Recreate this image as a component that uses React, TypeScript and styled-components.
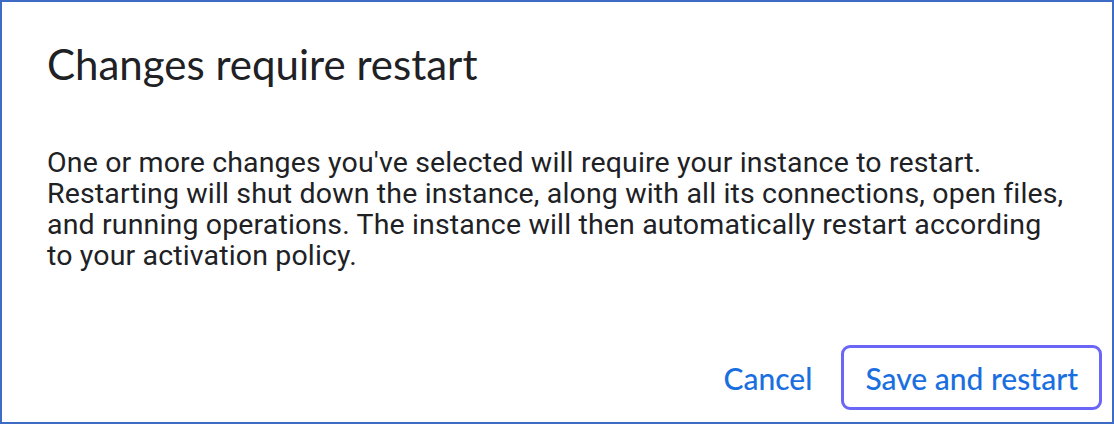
import React from 'react'
import styled, { createGlobalStyle } from 'styled-components'

const GlobalStyle = createGlobalStyle`
  html, body {
    margin: 0;
    padding: 0;
    background: #ffffff;
  }
  * {
    box-sizing: border-box;
  }
`

const Dialog = styled.div`
  display: flex;
  flex-direction: column;
  width: 1114px;
  height: 424px;
  border: 2px solid #3d6bc6;
  padding: 38px 45px 0;
  background: #ffffff;
`

const Title = styled.h1`
  margin: 0;
  font-family: Lato, 'Open Sans', sans-serif;
  font-weight: 400;
  font-size: 42px;
  line-height: 49px;
  color: #202124;
`

const Body = styled.p`
  margin: 58px 0 0;
  font-family: Roboto, 'Liberation Sans', sans-serif;
  font-size: 28.5px;
  line-height: 31px;
  letter-spacing: 0.15px;
  white-space: nowrap;
  color: #202124;
`

const Actions = styled.div`
  display: flex;
  justify-content: flex-end;
  align-items: center;
  gap: 16px;
  margin-top: auto;
  margin-right: -35px;
  margin-bottom: 12px;
`

const Button = styled.button<{ $focused?: boolean }>`
  font-family: Lato, 'Open Sans', sans-serif;
  font-weight: 500;
  font-size: 30px;
  color: #1a6fe0;
  background: transparent;
  border: 3px solid ${({ $focused }) => ($focused ? '#6b66f8' : 'transparent')};
  border-radius: 9px;
  height: 65px;
  padding: 0 ${({ $focused }) => ($focused ? '21px' : '10px')};
  cursor: pointer;
`

const App = () => (
  <>
    <GlobalStyle />
    <Dialog>
      <Title>Changes require restart</Title>
      <Body>
        One or more changes you've selected will require your instance to restart.
        <br />
        Restarting will shut down the instance, along with all its connections, open files,
        <br />
        and running operations. The instance will then automatically restart according
        <br />
        to your activation policy.
      </Body>
      <Actions>
        <Button>Cancel</Button>
        <Button $focused>Save and restart</Button>
      </Actions>
    </Dialog>
  </>
)

export default App
